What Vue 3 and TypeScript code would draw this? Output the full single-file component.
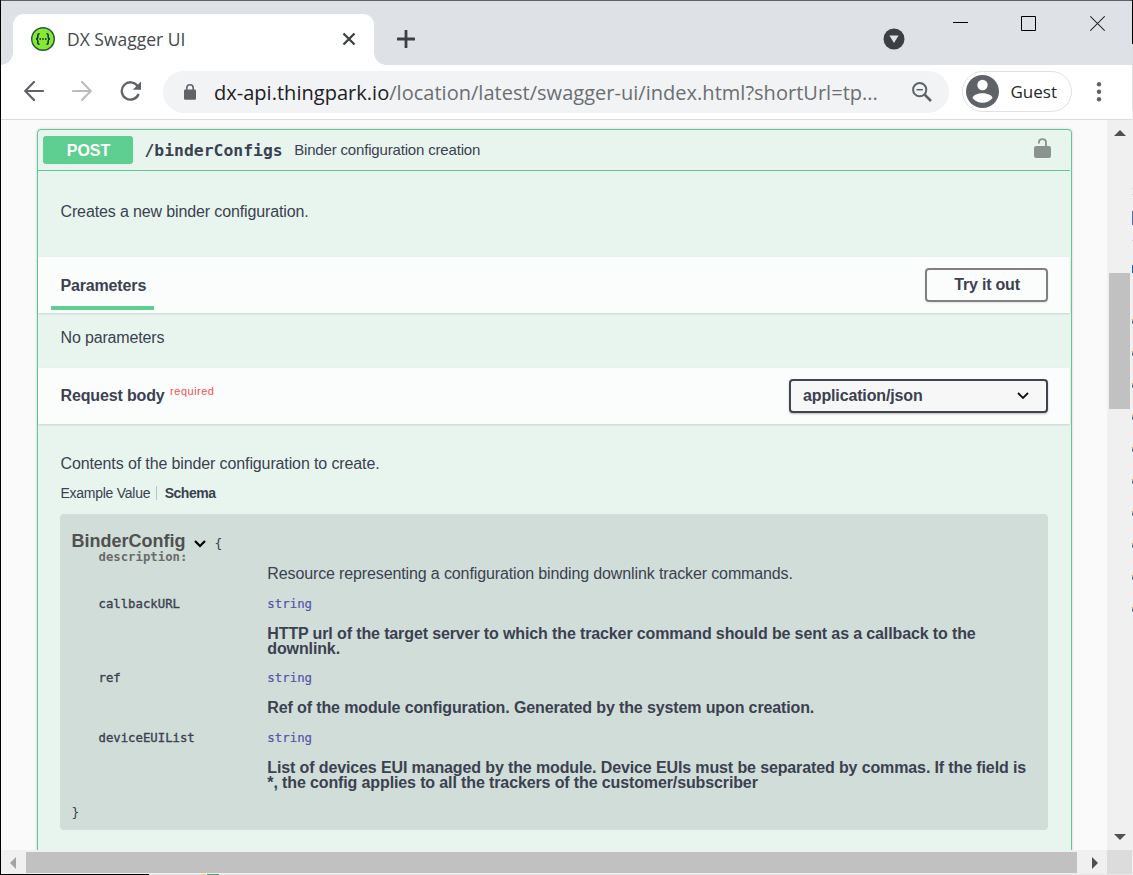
<script setup lang="ts">
interface Property {
  name: string
  type: string
  lines: { text: string; cls: string }[]
}

const properties: Property[] = [
  {
    name: 'callbackURL',
    type: 'string',
    lines: [
      { text: 'HTTP url of the target server to which the tracker command should be sent as a callback to the', cls: 'd1' },
      { text: 'downlink.', cls: 'd2' },
    ],
  },
  {
    name: 'ref',
    type: 'string',
    lines: [{ text: 'Ref of the module configuration. Generated by the system upon creation.', cls: 'd3' }],
  },
  {
    name: 'deviceEUIList',
    type: 'string',
    lines: [
      { text: 'List of devices EUI managed by the module. Device EUIs must be separated by commas. If the field is', cls: 'd4' },
      { text: '*, the config applies to all the trackers of the customer/subscriber', cls: 'd5' },
    ],
  },
]
</script>

<template>
  <div class="window">
    <header class="tabstrip">
      <div class="tab">
        <svg class="favicon" width="24" height="24" viewBox="0 0 24 24">
          <circle cx="12" cy="12" r="11.3" fill="#85ea2d" stroke="#2c5348" stroke-width="1.4" />
          <g fill="none" stroke="#173647" stroke-width="1.6">
            <path d="M8.6 6.8C6.3 6.6 7 8.6 6.8 10.1C6.7 11.4 6.2 12 5 12C6.2 12 6.7 12.6 6.8 13.9C7 15.4 6.3 17.4 8.6 17.2" />
            <path d="M15.4 6.8C17.7 6.6 17 8.6 17.2 10.1C17.3 11.4 17.8 12 19 12C17.8 12 17.3 12.6 17.2 13.9C17 15.4 17.7 17.4 15.4 17.2" />
          </g>
          <g fill="#173647"><circle cx="9.2" cy="12" r=".9" /><circle cx="12" cy="12" r=".9" /><circle cx="14.8" cy="12" r=".9" /></g>
        </svg>
        <span class="tab-title">DX Swagger UI</span>
        <svg class="tab-close" width="14" height="14" viewBox="0 0 14 14"><path d="M1.5 1.5L12.5 12.5M12.5 1.5L1.5 12.5" stroke="#3c4043" stroke-width="2.3" /></svg>
      </div>
      <svg class="new-tab" width="18" height="18" viewBox="0 0 18 18"><path d="M9 0.8V17.2M.8 9H17.2" stroke="#3c4043" stroke-width="2.8" stroke-linecap="round" /></svg>
      <svg class="tab-search" width="22" height="22" viewBox="0 0 22 22"><circle cx="11" cy="11" r="10.5" fill="#3c4043" /><path d="M6.4 7.6H15.6L11 15Z" fill="#dee1e6" /></svg>
      <div class="controls">
        <svg width="15" height="17" viewBox="0 0 15 17"><path d="M0 7.5H15" stroke="#000" /></svg>
        <svg width="15" height="17" viewBox="0 0 15 17"><path d="M.5 1.5H14.5V15.5H.5Z" fill="none" stroke="#000" /></svg>
        <svg width="15" height="17" viewBox="0 0 15 17"><path d="M.3 1.3L14.7 15.7M14.7 1.3L.3 15.7" stroke="#222" stroke-width="1.1" /></svg>
      </div>
    </header>

    <div class="toolbar">
      <svg class="nav" width="20" height="20" viewBox="0 0 20 20"><path d="M19 10H1.5M10 1L1.2 10L10 19" fill="none" stroke="#5f6368" stroke-width="2.2" stroke-linecap="round" /></svg>
      <svg class="nav" width="20" height="20" viewBox="0 0 20 20"><path d="M1 10H18.5M10 1L18.8 10L10 19" fill="none" stroke="#babcbe" stroke-width="2.2" stroke-linecap="round" /></svg>
      <svg class="nav reload" width="22" height="20" viewBox="0 0 22 20"><path d="M18.6 13A8.7 8.7 0 1 1 17.6 5" fill="none" stroke="#5f6368" stroke-width="2.3" /><path d="M21 .5V8.8H12.8Z" fill="#5f6368" /></svg>
      <div class="omnibox">
        <svg class="lock" width="12" height="16" viewBox="0 0 12 16"><rect y="5.5" width="12" height="10.3" rx="1.2" fill="#5f6368" /><path d="M2.8 6V4A3.2 3.2 0 0 1 9.2 4V6" fill="none" stroke="#5f6368" stroke-width="1.6" /></svg>
        <span class="url"><span class="host">dx-api.thingpark.io</span>/location/latest/swagger-ui/index.html?shortUrl=tp...</span>
        <svg class="zoom" width="20" height="20" viewBox="0 0 20 20"><circle cx="7.7" cy="7.7" r="6.6" fill="none" stroke="#5f6368" stroke-width="2" /><path d="M4.5 7.7H10.9" stroke="#5f6368" stroke-width="1.5" /><path d="M12.4 12.4L19 19" stroke="#5f6368" stroke-width="2.7" /></svg>
      </div>
      <div class="profile">
        <svg width="33" height="33" viewBox="0 0 33 33"><circle cx="16.5" cy="16.5" r="16.5" fill="#5f6368" /><circle cx="16.5" cy="10" r="5.2" fill="#fff" /><path d="M6.5 23C8.5 16.8 24.5 16.8 26.5 23C22 29.3 11 29.3 6.5 23Z" fill="#fff" /></svg>
        <span class="guest">Guest</span>
      </div>
      <svg class="menu" width="6" height="20" viewBox="0 0 6 20" fill="#5f6368"><circle cx="3" cy="2.3" r="2.2" /><circle cx="3" cy="9.8" r="2.2" /><circle cx="3" cy="17.3" r="2.2" /></svg>
    </div>

    <div class="content">
      <main class="page">
        <section class="operation">
          <div class="summary">
            <span class="method">POST</span>
            <span class="path">/binderConfigs</span>
            <span class="brief">Binder configuration creation</span>
            <svg class="auth" width="17" height="20" viewBox="0 0 17 20"><rect y="8" width="17" height="12" rx="2.2" fill="#8b938f" /><path d="M4.9 5.6V4.6Q4.9 1.1 8.4 1.1Q12 1.1 12 4.6V9" fill="none" stroke="#8b938f" stroke-width="1.9" /></svg>
          </div>
          <p class="intro">Creates a new binder configuration.</p>
          <div class="section-head">
            <div class="tab-head">Parameters</div>
            <button class="try">Try it out</button>
          </div>
          <p class="none">No parameters</p>
          <div class="section-head request">
            <span>Request body</span><span class="required">required</span>
            <div class="select">
              <span>application/json</span>
              <svg width="12" height="8" viewBox="0 0 12 8"><path d="M1 1L6 6L11 1" fill="none" stroke="#111" stroke-width="1.8" /></svg>
            </div>
          </div>
          <p class="contents">Contents of the binder configuration to create.</p>
          <div class="model-tabs"><span>Example Value</span><i></i><b>Schema</b></div>
          <div class="model">
            <div class="model-title">
              <span>BinderConfig</span>
              <svg width="12" height="8" viewBox="0 0 12 8"><path d="M1 1L6 6L11 1" fill="none" stroke="#000" stroke-width="2.2" /></svg>
              <span class="brace">{</span>
            </div>
            <div class="name muted">description:</div>
            <div class="resource">Resource representing a configuration binding downlink tracker commands.</div>
            <div v-for="p in properties" :key="p.name" class="property" :class="p.name">
              <div class="name">{{ p.name }}</div>
              <div>
                <div class="type">{{ p.type }}</div>
                <div class="desc">
                  <div v-for="l in p.lines" :key="l.cls"><span :class="l.cls">{{ l.text }}</span></div>
                </div>
              </div>
            </div>
            <div class="brace end">}</div>
          </div>
        </section>
      </main>
      <div class="vscroll">
        <svg width="12" height="6" viewBox="0 0 12 6"><path d="M0 6L6 0L12 6Z" fill="#505050" /></svg>
        <div class="vthumb"></div>
        <svg class="down" width="12" height="6" viewBox="0 0 12 6"><path d="M0 0L6 6L12 0Z" fill="#505050" /></svg>
      </div>
    </div>
    <div class="hscroll">
      <svg width="6" height="12" viewBox="0 0 6 12"><path d="M6 0L0 6L6 12Z" fill="#a3a3a3" /></svg>
      <div class="hthumb"></div>
      <svg class="right" width="6" height="12" viewBox="0 0 6 12"><path d="M0 0L6 6L0 12Z" fill="#505050" /></svg>
      <div class="corner"></div>
    </div>
    <div class="bottom-edge"></div>
    <div class="right-edge"></div>
    <div class="right-marks"></div>
  </div>
</template>

<style scoped>
* { box-sizing: border-box; }
p { margin: 0; }
svg { display: block; flex: none; }
span { white-space: nowrap; }
.window { position: relative; width: 1133px; height: 875px; overflow: hidden; display: flex; flex-direction: column; border-left: 1px solid #000; background: #fff; font-family: "Liberation Sans", Arial, sans-serif; color: #3b4151; }
.tabstrip { height: 65px; flex: none; background: #dee1e6; border-top: 1px solid #606165; display: flex; padding-left: 12px; }
.tab { position: relative; width: 361px; height: 51px; margin-top: 13px; background: #fff; border-radius: 11px 11px 0 0; display: flex; align-items: center; padding: 0 18px 2px; }
.tab::before, .tab::after { content: ""; position: absolute; bottom: 0; width: 12px; height: 12px; }
.tab::before { left: -12px; background: radial-gradient(circle at 0 0, transparent 11.5px, #fff 12px); }
.tab::after { right: -12px; background: radial-gradient(circle at 100% 0, transparent 11.5px, #fff 12px); }
.tab-title { margin: 0 0 0 12px; font: 17.5px/26px "Open Sans", sans-serif; color: #45484c; }
.tab-close { margin-left: auto; }
.new-tab { margin: 29px 0 0 23px; }
.tab-search { margin: 27px 0 0 467.5px; }
.controls { display: flex; gap: 53.5px; margin: 14px 0 0 48.5px; }
.controls svg:nth-child(2) { margin: 0 .5px 0 -.5px; }
.toolbar { height: 55px; flex: none; border-bottom: 1px solid #dadce0; display: flex; align-items: center; padding: 0 0 1px 23px; }
.nav { position: relative; top: -.5px; margin-right: 28px; }
.reload { margin-right: 0; left: -.5px; }
.omnibox { margin: 1px 0 0 20.5px; width: 786px; height: 42px; border-radius: 21px; background: #f1f3f4; display: flex; align-items: center; padding: 0 17px 0 21px; }
.url { margin: 2px 0 0 18.5px; font: 20px/30px "Open Sans", sans-serif; letter-spacing: .025px; color: #6b6e72; }
.host { color: #202124; }
.zoom { margin-left: auto; }
.profile { width: 110px; height: 41px; margin-left: 13px; border: 1.5px solid #e0e1e3; border-radius: 21px; display: flex; align-items: center; padding-left: 3px; }
.guest { margin: 1px 0 0 12px; font: 17px/26px "Open Sans", sans-serif; color: #26282b; }
.menu { margin-left: 24px; }
.content { height: 730px; flex: none; display: flex; background: #fafafa; }
.page { width: 1106px; padding: 9px 0 0 36px; overflow: hidden; }
.operation { width: 1035px; height: 740px; border: 1px solid #5ecb96; border-radius: 4px; background: #e8f5ee; box-shadow: 0 0 3px rgba(0, 0, 0, .19); }
.summary { height: 41px; border-bottom: 1px solid #5ecb96; margin-right: 1px; display: flex; align-items: center; padding-left: 5px; }
.method { width: 90px; height: 28px; border-radius: 3px; background: #5ece91; color: #fff; font: bold 16px/29px "Liberation Sans", sans-serif; text-align: center; padding-left: 1px; }
.path { margin: 2px 0 0 11.5px; font: bold 16.4px/22px "DejaVu Sans Mono", monospace; }
.brief { margin: -1px 0 0 11.5px; font-size: 15px; letter-spacing: -.17px; }
.auth { margin: -4px 19px 0 auto; }
.intro { height: 86px; padding: 32px 0 0 22.5px; font-size: 16px; line-height: 18px; letter-spacing: -.13px; }
.section-head { height: 56px; margin-right: 1px; background: #fbfdfc; box-shadow: 0 1px 2px rgba(0, 0, 0, .14); display: flex; align-items: center; font-size: 16px; font-weight: bold; padding-right: 22px; letter-spacing: -.14px; }
.tab-head { align-self: flex-end; margin: 0 0 3px 13.4px; width: 103px; height: 36px; padding: 3px 0 0 9px; border-bottom: 4px solid #5ece91; line-height: 18px; }
.try { margin-left: auto; width: 123px; height: 34px; border: 2px solid #808080; border-radius: 4px; background: transparent; color: #3b4151; font: bold 16px/28px "Liberation Sans", sans-serif; letter-spacing: -.2px; padding: 0 0 0 1px; box-shadow: 0 1px 2px rgba(0, 0, 0, .1); }
.none { height: 55px; padding: 16px 0 0 22.5px; font-size: 16px; line-height: 18px; letter-spacing: -.16px; }
.request { padding-left: 22.5px; }
.required { font-size: 11px; font-weight: normal; color: #f9504c; margin: -10px 0 0 5.5px; letter-spacing: .5px; }
.select { margin-left: auto; width: 259px; height: 34px; border: 2px solid #41444e; border-radius: 4px; background: #f7f7f7; display: flex; align-items: center; justify-content: space-between; padding: 0 17px 0 12px; box-shadow: 0 1px 2px rgba(0, 0, 0, .25); }
.contents { padding: 31px 0 0 22.5px; font-size: 16px; line-height: 18px; height: 60px; letter-spacing: -.12px; }
.model-tabs { height: 30px; padding: 1px 0 0 22.5px; display: flex; font-size: 14px; line-height: 16px; letter-spacing: -.26px; }
.model-tabs b { letter-spacing: -.5px; }
.model-tabs i { width: 1px; height: 14px; margin: 1px 7.5px 0 6px; background: #b9c4be; }
.model { margin-left: 22px; width: 988px; height: 316px; border-radius: 4px; background: #d1ddd8; padding-left: 12px; }
.model-title { height: 36px; padding-top: 16px; margin-left: -.5px; display: flex; font-weight: bold; font-size: 18px; line-height: 22px; color: #505050; }
.model-title svg { margin: 10px 8.5px 0 8.5px; }
.brace { font: 13px/28px "DejaVu Sans Mono", monospace; color: #3b4151; }
.brace.end { line-height: 15px; margin: 14px 0 0 -.5px; }
.name { font: 12.3px/15px "DejaVu Sans Mono", monospace; padding-left: 26.5px; -webkit-text-stroke: .35px currentColor; }
.muted { color: #6b6b6b; font-weight: bold; -webkit-text-stroke: 0; }
.resource { padding: 1px 0 0 195.3px; font-size: 16px; line-height: 15px; letter-spacing: -.125px; white-space: nowrap; }
.property { display: grid; grid-template-columns: 195.3px 1fr; margin-top: 15px; }
.type { position: relative; top: -1px; font: 12.4px/15px "DejaVu Sans Mono", monospace; color: #5555aa; -webkit-text-stroke: .2px currentColor; }
.callbackURL .name { position: relative; top: 1px; }
.callbackURL .type { top: 0; }
.desc { margin-top: 15px; font-size: 16px; line-height: 15px; font-weight: bold; letter-spacing: -.123px; }
.ref .desc, .deviceEUIList .desc { margin: 14px 0 1px; }
.vscroll { width: 26px; background: #f0f0f0; display: flex; flex-direction: column; padding: 10px 0 10px 2px; }
.vscroll svg { margin-left: 5px; }
.vthumb { width: 21px; height: 136px; margin-top: 137px; background: #c1c1c1; }
.vscroll .down { margin-top: auto; }
.hscroll { height: 25px; flex: none; background: #f0f0f0; display: flex; align-items: center; padding-left: 9px; }
.hthumb { width: 1051px; height: 21px; margin-left: 10px; background: #c1c1c1; }
.right { margin-left: 15px; }
.corner { width: 25px; height: 25px; margin-left: 9px; background: #dcdcdc; }
.bottom-edge { position: absolute; left: 0; right: 0; bottom: 0; height: 1px; background: linear-gradient(90deg, #000 148px, #e8e8e8 148px 200px, #f2d36c 200px 204px, #e8e8e8 204px 206px, #579b7d 206px 218px, #e8e8e8 218px); }
.right-edge { position: absolute; right: 0; top: 0; width: 1px; height: 875px; background: linear-gradient(#000 44px, #e0e0e0 44px 109px, #f0f0f0 109px 188px, #ccc 188px 189px, #f0f0f0 189px 194px, #ccc 194px 195px, #f0f0f0 195px 211px, #5572ad 211px 225px, #f0f0f0 225px 240px, #ccc 240px 241px, #f0f0f0 241px 265px, #1769bd 265px 273px, #f0f0f0 273px); }
.right-marks { position: absolute; right: 0; top: 319px; width: 1px; height: 294px; background: repeating-linear-gradient(#e0a050 0 2px, #4f5f98 2px 4px, #6db8ea 4px 5px, #f0f0f0 5px 32px); }
</style>
